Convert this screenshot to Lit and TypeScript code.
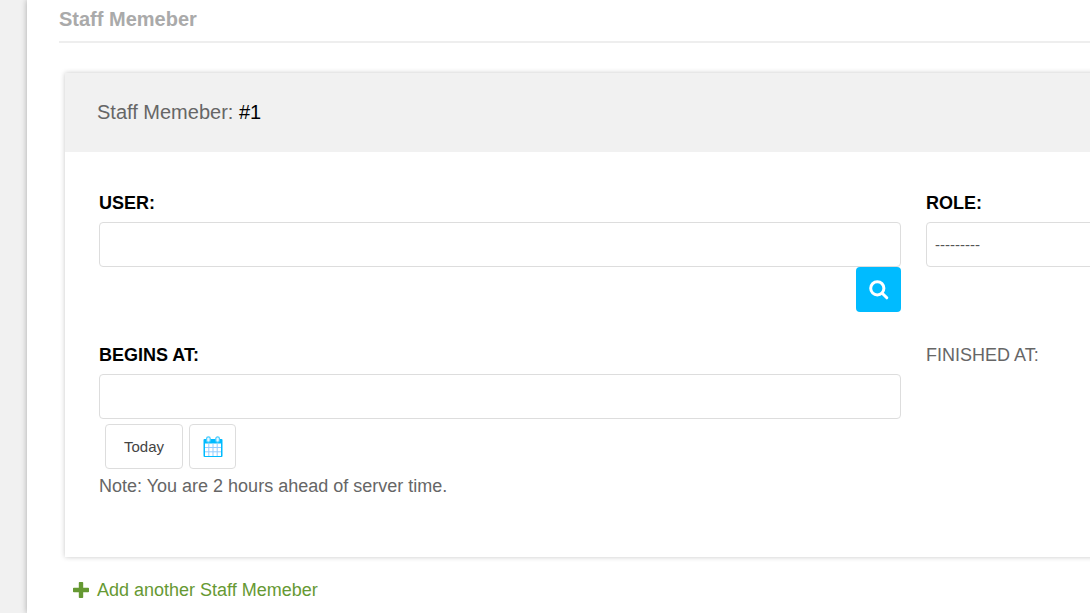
import { LitElement, html, css, svg } from "lit";
import { customElement } from "lit/decorators.js";

const searchIcon = svg`<svg viewBox="0 0 20 20" width="20" height="20" aria-hidden="true">
  <circle cx="8.3" cy="8.3" r="6.6" fill="none" stroke="#fff" stroke-width="3"/>
  <path d="M13.2 13.2 L17.8 17.8" stroke="#fff" stroke-width="3" stroke-linecap="round"/>
</svg>`;

const calendarIcon = svg`<svg viewBox="0 0 20 22" width="20" height="22" aria-hidden="true">
  <rect x="0.5" y="3" width="19" height="18" rx="1" fill="#0bf"/>
  <rect x="2" y="7.5" width="16" height="12.5" fill="#fff"/>
  <path d="M5.8 7.5V20M10 7.5V20M14.2 7.5V20M2 11.5H18M2 15.8H18" stroke="#94ccff" stroke-width="1"/>
  <rect x="3.6" y="0.8" width="3.6" height="5.4" rx="1.8" fill="#e6f6ff" stroke="#4cf" stroke-width="1.2"/>
  <rect x="12.8" y="0.8" width="3.6" height="5.4" rx="1.8" fill="#e6f6ff" stroke="#4cf" stroke-width="1.2"/>
</svg>`;

const plusIcon = svg`<svg viewBox="0 0 16 16" width="16" height="16" aria-hidden="true">
  <path d="M6.6 0H9.4Q10.2 0 10.2 .8V5.8H15.2Q16 5.8 16 6.6V9.4Q16 10.2 15.2 10.2H10.2V15.2Q10.2 16 9.4 16H6.6Q5.8 16 5.8 15.2V10.2H.8Q0 10.2 0 9.4V6.6Q0 5.8 .8 5.8H5.8V.8Q5.8 0 6.6 0Z" fill="#693"/>
</svg>`;

@customElement("app-root")
export class AppRoot extends LitElement {
  static styles = css`
    :host {
      display: block;
      box-sizing: border-box;
      min-height: 100vh;
      padding-left: 27px;
      overflow: hidden;
      background: #f1f1f1;
      color: #666;
      font: 18px/24px "Liberation Sans", Arial, sans-serif;
    }
    * { box-sizing: border-box; }
    .sheet {
      min-height: 100vh;
      padding: 7px 0 7px 32px;
      background: #fff;
      box-shadow: 0 0 6px rgba(0, 0, 0, 0.3);
    }
    .title {
      margin: 0 0 30px;
      padding-bottom: 10px;
      border-bottom: 2px solid #eee;
      color: #aaa;
      font-size: 20px;
      line-height: 24px;
    }
    .card {
      margin: 0 -8px 0 6px;
      background: #fff;
      box-shadow: 0 0 5px rgba(0, 0, 0, 0.22);
    }
    .card-title {
      margin: 0;
      padding: 27px 32px 28px;
      background: #f1f1f1;
      font-size: 20px;
      font-weight: 400;
      line-height: 24px;
    }
    .number { color: #000; }
    .fields {
      display: grid;
      grid-template-columns: minmax(0, 14fr) minmax(0, 3fr);
      column-gap: 25px;
      row-gap: 31px;
      padding: 39px 0 59px 34px;
    }
    .field { display: flex; flex-direction: column; align-items: flex-start; }
    .label { margin-bottom: 7px; text-transform: uppercase; }
    .required { color: #000; font-weight: 700; }
    .control {
      width: 100%;
      height: 45px;
      padding: 0 8px;
      border: 1px solid #ddd;
      border-radius: 4px;
      background: #fff;
      color: #555;
      font: 15px/20px "Liberation Sans", Arial, sans-serif;
      appearance: none;
    }
    .button {
      display: flex;
      align-items: center;
      justify-content: center;
      height: 45px;
      padding: 0;
      border: 1px solid #ddd;
      border-radius: 4px;
      background: #fff;
      color: #444;
      font: 15px/20px "Liberation Sans", Arial, sans-serif;
    }
    .search { width: 45px; align-self: flex-end; border: 0; background: #0bf; }
    .today { padding: 0 18px; }
    .calendar { width: 47px; }
    .shortcuts { display: flex; gap: 6px; padding: 5px 6px; }
    .note { margin: 0; }
    .add {
      display: inline-flex;
      align-items: center;
      gap: 8px;
      margin: 21px 0 0 14px;
      color: #693;
      text-decoration: none;
    }
  `;

  render() {
    return html`
      <main class="sheet">
        <h2 class="title">Staff Memeber</h2>
        <section class="card">
          <h3 class="card-title">Staff Memeber: <span class="number">#1</span></h3>
          <div class="fields">
            <div class="field">
              <label class="label required" for="user">User:</label>
              <input class="control" id="user" type="text" />
              <button class="button search" type="button" aria-label="Search">${searchIcon}</button>
            </div>
            <div class="field">
              <label class="label required" for="role">Role:</label>
              <select class="control" id="role"><option>---------</option></select>
            </div>
            <div class="field">
              <label class="label required" for="begins">Begins at:</label>
              <input class="control" id="begins" type="text" />
              <div class="shortcuts">
                <button class="button today" type="button">Today</button>
                <button class="button calendar" type="button" aria-label="Calendar">${calendarIcon}</button>
              </div>
              <p class="note">Note: You are 2 hours ahead of server time.</p>
            </div>
            <div class="field"><span class="label">Finished at:</span></div>
          </div>
        </section>
        <a class="add" href="#">${plusIcon}<span>Add another Staff Memeber</span></a>
      </main>
    `;
  }
}
